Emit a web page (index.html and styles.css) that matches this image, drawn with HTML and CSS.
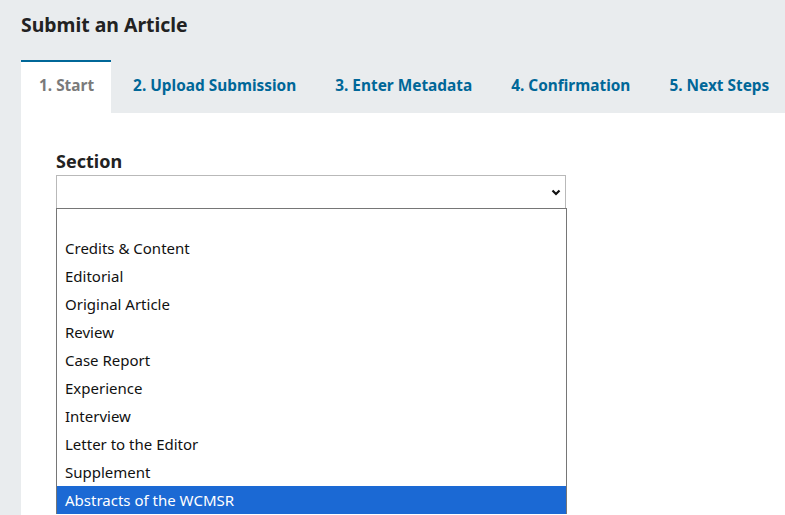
FILE: index.html
```html
<!DOCTYPE html>
<html lang="en">
<head>
    <meta charset="UTF-8">
    <meta name="viewport" content="width=device-width, initial-scale=1.0">
    <title>Submit an Article</title>
    <link rel="stylesheet" href="styles.css">
</head>
<body>
    <div class="page-header">
        <h1>Submit an Article</h1>
    </div>

    <ul class="steps">
        <li class="step active">1. Start</li>
        <li class="step">2. Upload Submission</li>
        <li class="step">3. Enter Metadata</li>
        <li class="step">4. Confirmation</li>
        <li class="step">5. Next Steps</li>
    </ul>

    <div class="panel">
        <div class="field">
            <label class="field-label" for="sectionId">Section</label>
            <div class="select-wrap">
                <div class="select" id="sectionId" role="combobox" aria-expanded="true"></div>
                <svg class="chevron" width="10" height="7" viewBox="0 0 10 7">
                    <path d="M1.5 1.5 L5 5 L8.5 1.5" fill="none" stroke="#111" stroke-width="2.2"/>
                </svg>

                <!-- open dropdown list -->
                <ul class="options" role="listbox">
                    <li class="option blank"></li>
                    <li class="option">Credits &amp; Content</li>
                    <li class="option">Editorial</li>
                    <li class="option">Original Article</li>
                    <li class="option">Review</li>
                    <li class="option">Case Report</li>
                    <li class="option">Experience</li>
                    <li class="option">Interview</li>
                    <li class="option">Letter to the Editor</li>
                    <li class="option">Supplement</li>
                    <li class="option selected">Abstracts of the WCMSR</li>
                </ul>
            </div>
        </div>
    </div>
</body>
</html>
```

FILE: styles.css
```css
* {
    margin: 0;
    padding: 0;
    box-sizing: border-box;
}

body {
    font-family: "Noto Sans", "Open Sans", sans-serif;
    background: #e9ecee;
    color: #222;
    overflow: hidden;
}

.page-header {
    padding: 11px 21px 0;
    height: 60px;
}

.page-header h1 {
    font-size: 19.4px;
    font-weight: 700;
    line-height: 27px;
    color: #222;
}

.steps {
    list-style: none;
    display: flex;
    padding-left: 21px;
}

.step {
    font-size: 15.4px;
    font-weight: 700;
    line-height: 21px;
    color: #006798;
    padding: 13px 17px 17px 22px;
    border-top: 2px solid transparent;
    white-space: nowrap;
}

.step.active {
    background: #fff;
    color: #7a7a7a;
    border-top-color: #006798;
    padding-left: 18px;
}

.panel {
    background: #fff;
    margin-left: 21px;
    height: 420px;
    padding: 37px 35px 0;
}

.field-label {
    display: block;
    font-size: 18px;
    font-weight: 700;
    line-height: 23px;
    margin-bottom: 2px;
    color: #222;
}

.select-wrap {
    position: relative;
    width: 510px;
}

.select {
    height: 34px;
    border: 1px solid #b9b9b9;
    background: #fff;
}

.chevron {
    position: absolute;
    top: 14px;
    right: 5px;
}

.options {
    list-style: none;
    position: absolute;
    top: 33px;
    left: 0;
    width: 511px;
    background: #fff;
    border: 1px solid #767676;
    border-bottom: none;
}

.option {
    height: 28px;
    line-height: 28px;
    padding-left: 8px;
    font-size: 15px;
    color: #111;
}

.option.blank {
    height: 25px;
}

.option.selected {
    background: #1b69d4;
    color: #fff;
}
```
